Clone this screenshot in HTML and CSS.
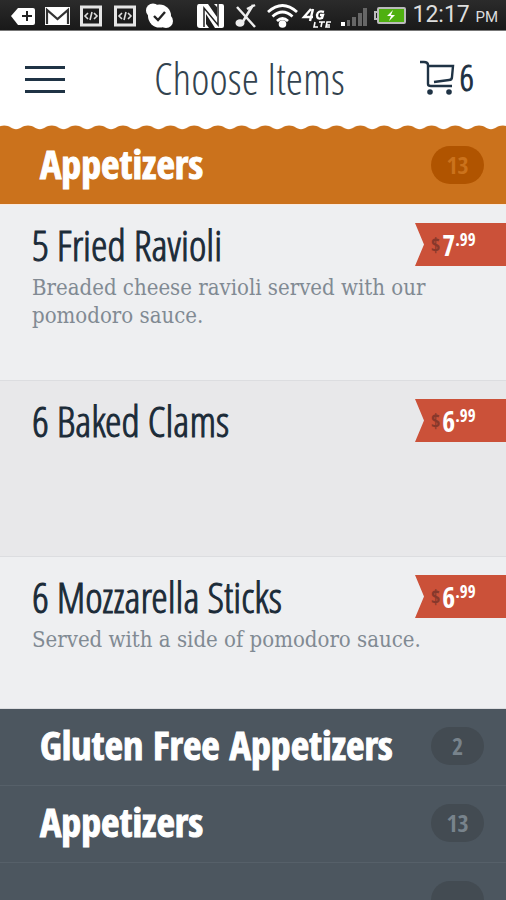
FILE: index.html
```html
<!DOCTYPE html>
<html lang="en">
<head>
<meta charset="utf-8">
<meta name="viewport" content="width=device-width, initial-scale=1">
<title>Choose Items</title>
<link rel="stylesheet" href="styles.css">
</head>
<body>
<div class="status">
  <svg class="status-icons" viewBox="0 0 412 30" aria-hidden="true">
    <g fill="#fff">
      <path d="M11 16 18 8H33q2 0 2 2V23q0 2-2 2H18Z"/>
      <path d="M22 16h10M27 11v10" stroke="#222" stroke-width="2"/>
      <rect x="45" y="7" width="25" height="18"/>
      <path d="M47 24V10l10.500 9L68 10v14" fill="none" stroke="#333" stroke-width="2.200"/>
    </g>
    <g fill="#1c1c1c" stroke="#e4e4e4" stroke-width="3">
      <rect x="81.500" y="7" width="19" height="18"/><rect x="115.500" y="7" width="19" height="18"/>
    </g>
    <g fill="none" stroke="#ddd" stroke-width="1.600">
      <path d="m88 13-3 3 3 3m6-6 3 3-3 3m-2-7-2 8"/>
      <path d="m122 13-3 3 3 3m6-6 3 3-3 3m-2-7-2 8"/>
    </g>
    <g fill="#fff"><circle cx="159.500" cy="16" r="11.500"/><circle cx="153" cy="10.500" r="7"/><circle cx="166" cy="21" r="7"/></g>
    <path d="m154 16 4 4 7-8" fill="none" stroke="#222" stroke-width="2.400"/>
    <path d="M201 4h7l9 13V7l-3-3h8q2 0 2 2v20q0 2-2 2h-7l-9-14v10l3 4h-9q-3 0-3-3V7q0-3 2-3Z" fill="#fff"/>
    <path d="M204 27V8l14 17V4" fill="none" stroke="#222" stroke-width="1.500"/>
    <g fill="none" stroke="#eee" stroke-width="2.500">
      <path d="m237 7 18 20M253 5l-11 18m5-14 8-4"/>
    </g>
    <ellipse cx="240" cy="23" rx="4.500" ry="3.800" fill="#eee"/>
    <g fill="none" stroke="#fff" stroke-width="2.800">
      <path d="M268 12q14.500-13 29 0M272.500 16.500q10-9 20 0M277 21q5.500-5 11 0"/>
    </g>
    <circle cx="282.500" cy="24" r="3.800" fill="#fff"/>
    <g fill="none" stroke="#fff" stroke-width="2.400">
      <path d="m311 9-7 8h9m0-8-3 12M324 12q-6-2-7 3 0 5 5 3l1-3h-3"/>
      <path d="m315 22-1 5h4m1-5h6m-3 0-1 5m10-5h-4l-1 5h4m-3-2h3" stroke-width="1.600"/>
    </g>
    <path d="M341 22h4v4h-4Z" fill="#fff"/>
    <path d="M347 20h3v6h-3ZM352 17h4v9h-4ZM358 13h4v13h-4ZM363 8h4v18h-4Z" fill="#666"/>
    <rect x="378" y="8" width="27" height="15" rx="1" fill="#4fb010" stroke="#bbb" stroke-width="2"/>
    <path d="M377 12h-2v7h2" fill="none" stroke="#bbb" stroke-width="2"/>
    <path d="m393 10-6 6h4l-2 5 6-6h-4Z" fill="#fff"/>
  </svg>
  <time class="clock">12:17 <small>PM</small></time>
</div>

<header class="topbar">
  <button class="menu" aria-label="Menu"><span></span><span></span><span></span></button>
  <h1>Choose Items</h1>
  <button class="cart" aria-label="Cart, 6 items">
    <svg width="36" height="36" viewBox="0 0 36 36" fill="none" stroke="#1f3345" stroke-width="2.400" aria-hidden="true">
      <path d="M1 2h4q4 0 4 3v19q0 2 3 2h21"/>
      <path d="M9 6h25l-1 11q0 3-3 3l-15 2"/>
      <circle cx="11" cy="32" r="2.800" fill="#1f3345" stroke="none"/>
      <circle cx="30" cy="32" r="2.800" fill="#1f3345" stroke="none"/>
    </svg>
    <span>6</span>
  </button>
</header>

<main>
  <button class="category active">
    <svg class="scallop" aria-hidden="true">
      <defs><pattern id="wave" x="-7.600" width="23.740" height="5" patternUnits="userSpaceOnUse">
        <path d="M0 0H23.740V4.200C19 4 17.500 .5 11.870 .5S4.700 4 0 4.200Z" fill="#fff"/>
      </pattern></defs>
      <rect width="100%" height="5" fill="url(#wave)"/>
    </svg>
    <span class="name">Appetizers</span><span class="count">13</span>
  </button>
  <ul class="items">
    <li class="item">
      <div class="info"><h2>5 Fried Ravioli</h2><p>Breaded cheese ravioli served with our pomodoro sauce.</p></div>
      <div class="price"><i>$</i><b>7</b><sup>.99</sup></div>
    </li>
    <li class="item alt">
      <div class="info"><h2>6 Baked Clams</h2></div>
      <div class="price"><i>$</i><b>6</b><sup>.99</sup></div>
    </li>
    <li class="item short">
      <div class="info"><h2>6 Mozzarella Sticks</h2><p>Served with a side of pomodoro sauce.</p></div>
      <div class="price"><i>$</i><b>6</b><sup>.99</sup></div>
    </li>
  </ul>
  <button class="category"><span class="name">Gluten Free Appetizers</span><span class="count">2</span></button>
  <button class="category"><span class="name">Appetizers</span><span class="count">13</span></button>
  <button class="category" aria-label="More"><span class="name"></span><span class="count"></span></button>
</main>
</body>
</html>
```
FILE: styles.css
```css
* { box-sizing: border-box; }
body {
  margin: 0;
  height: 100vh;
  overflow: hidden;
  background: #4c565f;
  color: #1b2b38;
  font-family: "Open Sans Condensed", "Noto Sans", sans-serif;
}
button { border: 0; padding: 0; background: none; font: inherit; color: inherit; }
h1, h2, p, ul { margin: 0; padding: 0; }

.status {
  display: flex;
  align-items: center;
  height: 31px;
  background: linear-gradient(#2b2b2b, #191919);
  border-bottom: 1px solid #777;
  color: #ddd;
}
.status-icons { width: 412px; height: 30px; flex: none; }
.clock { flex: 1; padding: 2px 8px 0 0; text-align: right; white-space: nowrap; font: 23px/28px Roboto, sans-serif; }
.clock small { font-size: 15px; }

.topbar {
  display: grid;
  grid-template-columns: 1fr auto 1fr;
  align-items: center;
  height: 94px;
  padding: 0 32px 0 25px;
  background: #fff;
}
.menu { display: grid; gap: 9px; width: 40px; padding-top: 2px; }
.menu span { height: 3px; background: #1f3345; }
h1, h2, .cart { font-family: "Open Sans Condensed Light", "Noto Sans", sans-serif; }
h1 { font-size: 44px; font-weight: 300; line-height: 48px; color: #33434f; }
.cart { display: flex; align-items: center; justify-self: end; gap: 5px; font-size: 36px; line-height: 40px; -webkit-text-stroke: 1px #1f3345; }

.category {
  position: relative;
  display: flex;
  align-items: center;
  justify-content: space-between;
  width: 100%;
  height: 77px;
  padding: 0 22px 2px 40px;
  border-bottom: 1px solid #566069;
  background: #4c565f;
  color: #fff;
  text-align: left;
}
.category.active { height: 80px; padding-bottom: 0; background: #cb721c; border-color: #fbe9dd; }
.scallop { position: absolute; top: 0; left: 0; width: 100%; height: 5px; }
.name { font-size: 40px; font-weight: 700; line-height: 44px; -webkit-text-stroke: 1px #fff; padding-bottom: 2px; }
.count {
  width: 53px;
  height: 38px;
  border-radius: 19px;
  background: #434b52;
  color: #78838c;
  text-align: center;
  font-size: 24px;
  font-weight: 700;
  line-height: 38px;
}
.active .count { background: #b05400; color: #cb721c; }

.items { list-style: none; }
.item {
  display: flex;
  align-items: flex-start;
  justify-content: space-between;
  height: 176px;
  padding: 18px 0 0 32px;
  background: #eeeff1;
  border-bottom: 1px solid #dcdde0;
}
.item.alt { background: #e8e8ea; }
.item.short { height: 152px; }
.info { position: relative; flex: 1; min-width: 0; }
h2 { font-size: 42px; font-weight: 400; line-height: 44px; -webkit-text-stroke: 1px #1b2b38; }
.info p { font: 22px/28px "DejaVu Serif Condensed", "Noto Serif", serif; color: #818a93; margin: 7px -24px 0 0; }
.price {
  display: flex;
  align-items: center;
  width: 91px;
  height: 43px;
  padding-left: 16px;
  background: #cb5139;
  color: #fff;
  clip-path: polygon(0 0, 100% 0, 100% 100%, 0 100%, 9px 50%);
  font-weight: 700;
}
.price i { font-size: 20px; font-style: normal; color: #87382b; padding-right: 2px; }
.price b { font-size: 28px; }
.price sup { font-size: 17px; line-height: 24px; align-self: flex-start; padding-top: 5px; }
```
